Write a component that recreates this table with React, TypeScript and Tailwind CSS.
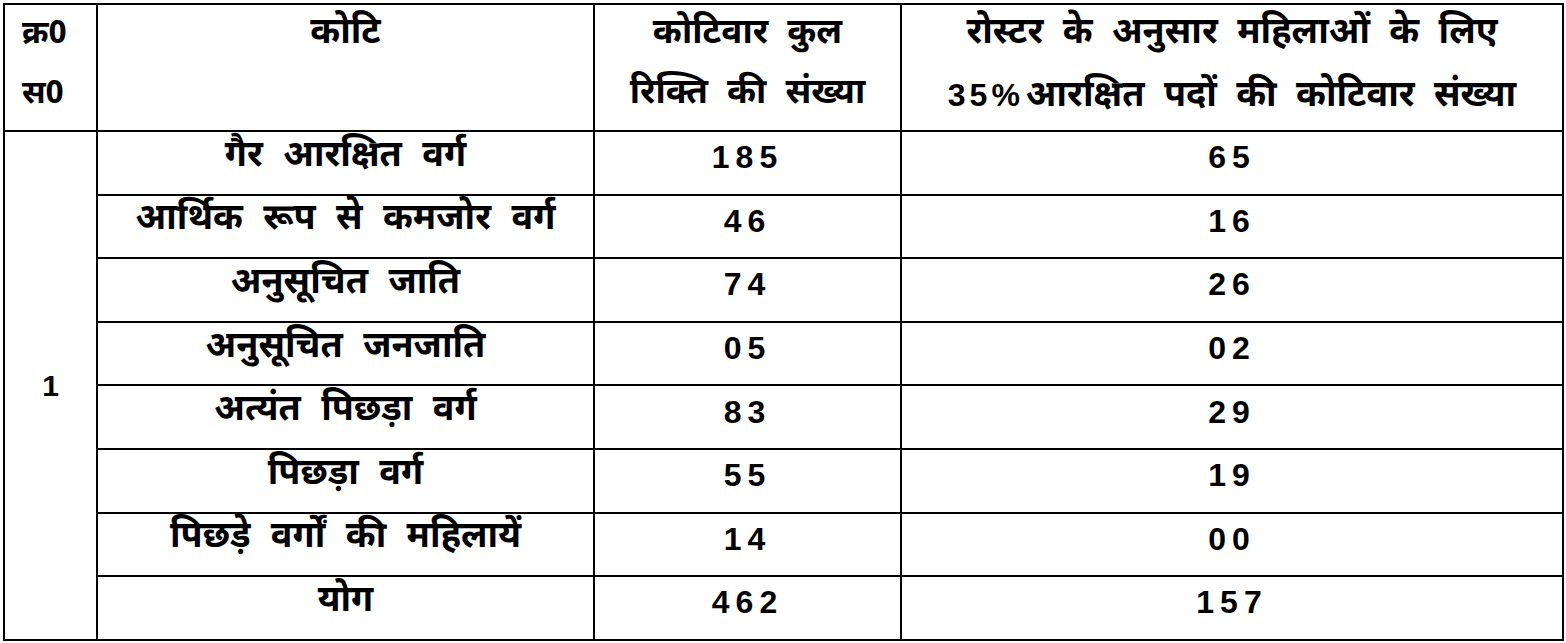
const rows = [
  { label: 'गैर आरक्षित वर्ग', total: '185', women: '65' },
  { label: 'आर्थिक रूप से कमजोर वर्ग', total: '46', women: '16' },
  { label: 'अनुसूचित जाति', total: '74', women: '26' },
  { label: 'अनुसूचित जनजाति', total: '05', women: '02' },
  { label: 'अत्यंत पिछड़ा वर्ग', total: '83', women: '29' },
  { label: 'पिछड़ा वर्ग', total: '55', women: '19' },
  { label: 'पिछड़े वर्गों की महिलायें', total: '14', women: '00' },
  { label: 'योग', total: '462', women: '157' },
];

const hindi = "font-['Noto_Sans_Devanagari','Lohit_Devanagari','Noto_Sans','Liberation_Sans',sans-serif]";
const nums = "font-['Liberation_Sans',Arial,sans-serif]";

export default function App() {
  return (
    <div className="w-[1566px] h-[643px] bg-white pl-[3px] pt-[3px] text-black">
      <table className="w-[1559px] border-collapse border-2 border-black table-fixed">
        <colgroup>
          <col className="w-[93px]" />
          <col className="w-[497px]" />
          <col className="w-[307px]" />
          <col className="w-[662px]" />
        </colgroup>
        <thead>
          <tr className="h-[127px]">
            <th className={`${hindi} border-2 border-black align-top text-left font-bold text-[32px] leading-[60px] pl-[17px]`}>
              <div>क्र0</div>
              <div>स0</div>
            </th>
            <th className={`${hindi} border-2 border-black align-top font-bold text-[36px] leading-[60px]`}>
              कोटि
            </th>
            <th className={`${hindi} border-2 border-black align-top font-bold text-[35px] leading-[60px] [word-spacing:10px]`}>
              <div>कोटिवार कुल</div>
              <div>रिक्ति की संख्या</div>
            </th>
            <th className={`${hindi} border-2 border-black align-top font-bold text-[36px] leading-[60px] [word-spacing:10px]`}>
              <div>रोस्टर के अनुसार महिलाओं के लिए</div>
              <div>
                <span className={`${nums} tracking-[4px] [word-spacing:0px] text-[32px] mr-[2px]`}>35%</span>आरक्षित पदों की कोटिवार संख्या
              </div>
            </th>
          </tr>
        </thead>
        <tbody>
          {rows.map((r, i) => (
            <tr key={r.label} className="h-[63.6px]">
              {i === 0 && (
                <td
                  rowSpan={rows.length}
                  className={`${nums} border-2 border-black text-center align-middle font-bold text-[30px]`}
                >
                  1
                </td>
              )}
              <td className={`${hindi} border-2 border-black text-center font-bold text-[36px] leading-[44px] pb-[10px] [word-spacing:11px]`}>
                {r.label}
              </td>
              <td className={`${nums} border-2 border-black text-center font-bold text-[32px] leading-[40px] tracking-[6px] pb-[11px]`}>
                {r.total}
              </td>
              <td className={`${nums} border-2 border-black text-center font-bold text-[32px] leading-[40px] tracking-[6px] pb-[11px]`}>
                {r.women}
              </td>
            </tr>
          ))}
        </tbody>
      </table>
    </div>
  );
}
